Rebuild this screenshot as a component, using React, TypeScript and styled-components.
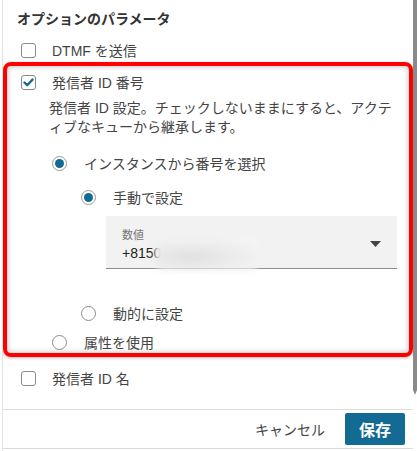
import React from "react";
import styled, { createGlobalStyle } from "styled-components";

const Global = createGlobalStyle`
  html, body { margin: 0; padding: 0; background: #fff; }
  body {
    font-family: "Liberation Sans", "Noto Sans CJK JP", sans-serif;
    color: #444;
  }
`;

const Page = styled.div`
  display: flex;
  width: 417px;
  height: 451px;
  overflow: hidden;
  background: #fff;
`;

const Main = styled.div`
  flex: 1;
  min-width: 0;
  display: flex;
  flex-direction: column;
  margin-left: 2px;
  border-left: 1px solid #e2e2ea;
`;

const Content = styled.div`
  height: 409px;
  box-sizing: border-box;
  padding: 9px 0 0 14px;
  overflow: hidden;
`;

const ScrollColumn = styled.div`
  width: 4px;
  display: flex;
  flex-direction: column;
  align-items: center;
`;

const Thumb = styled.div`
  width: 4px;
  height: 390px;
  background: #8a8a8a;
`;

const ThumbTip = styled.div`
  width: 0;
  height: 0;
  border-left: 2px solid transparent;
  border-right: 2px solid transparent;
  border-top: 5px solid #8a8a8a;
`;

const Title = styled.h3`
  margin: 0;
  font-size: 14px;
  line-height: 20px;
  font-weight: bold;
  color: #333;
`;

const CheckRow = styled.label<{ $mt: number }>`
  display: flex;
  align-items: center;
  gap: 16px;
  height: 20px;
  margin-top: ${(p) => p.$mt}px;
  padding-left: 4px;
  font-size: 14px;
  color: #444;
`;

const CheckBox = styled.span`
  width: 15px;
  height: 15px;
  box-sizing: border-box;
  border: 1px solid #8a8a8a;
  border-radius: 3px;
  background: #fff;
  display: flex;
  align-items: center;
  justify-content: center;
  flex: none;
`;

const Highlight = styled.div`
  margin: 2px 0 0 -14px;
  border: 4px solid #ff0000;
  border-radius: 8px;
  padding: 6px 12px 1px 10px;
  box-shadow: inset 0 0 5px 1px rgba(0, 0, 0, 0.22), 0 1px 3px rgba(0, 0, 0, 0.3);
`;

const Description = styled.p`
  margin: 7px 0 0 32px;
  font-size: 14px;
  line-height: 19px;
  white-space: nowrap;
  color: #444;
`;

const RadioRow = styled.label<{ $mt: number; $indent: number }>`
  display: flex;
  align-items: center;
  gap: 17px;
  height: 20px;
  margin-top: ${(p) => p.$mt}px;
  margin-left: ${(p) => p.$indent}px;
  font-size: 14px;
  color: #444;
`;

const Radio = styled.span<{ $on?: boolean }>`
  width: 15px;
  height: 15px;
  box-sizing: border-box;
  border-radius: 50%;
  border: 1px solid ${(p) => (p.$on ? "#9a9a9a" : "#8d8d8d")};
  background: #fff;
  display: flex;
  align-items: center;
  justify-content: center;
  flex: none;
  &::after {
    content: "";
    display: ${(p) => (p.$on ? "block" : "none")};
    width: 9px;
    height: 9px;
    border-radius: 50%;
    background: #0f6b94;
  }
`;

const Select = styled.div`
  margin: 9px 0 0 89px;
  height: 53px;
  box-sizing: border-box;
  background: #f2f2f2;
  border-bottom: 1px solid #8c8c8c;
  padding: 0 16px;
  display: flex;
  align-items: center;
  justify-content: space-between;
`;

const SelectText = styled.div`
  align-self: flex-start;
  padding-top: 12px;
  display: flex;
  flex-direction: column;
  gap: 2px;
`;

const SelectLabel = styled.span`
  font-size: 11px;
  line-height: 14px;
  color: #777;
`;

const SelectValue = styled.span`
  display: flex;
  align-items: center;
  height: 18px;
  font-size: 14px;
  color: #222;
`;

const Redaction = styled.span`
  width: 104px;
  height: 32px;
  margin: -6px 0 -8px -6px;
  border-radius: 8px;
  background: radial-gradient(ellipse at 35% 60%, #e0e0e0 0%, #ececec 45%, #f7f7f7 100%);
  filter: blur(3px);
  flex: none;
`;

const Caret = styled.svg`
  width: 11px;
  height: 6px;
  margin-top: 3px;
  flex: none;
`;

const Footer = styled.div`
  height: 38px;
  border-top: 1px solid #dcdcdc;
  border-bottom: 1px solid #dcdcdc;
  margin-bottom: 2px;
  display: flex;
  justify-content: flex-end;
  align-items: center;
  gap: 20px;
  padding-right: 8px;
`;

const CancelButton = styled.button`
  background: none;
  border: none;
  padding: 0;
  font-family: inherit;
  font-size: 14px;
  color: #444;
`;

const SaveButton = styled.button`
  width: 60px;
  height: 32px;
  border: none;
  border-radius: 2px;
  background: #136b93;
  color: #fff;
  font-family: inherit;
  font-size: 16px;
  font-weight: bold;
  padding: 0;
`;

const Check = () => (
  <svg width="11" height="9" viewBox="0 0 11 9">
    <polyline
      points="1.5,4.5 4.2,7.2 9.5,1.6"
      fill="none"
      stroke="#1b6c94"
      strokeWidth="2.4"
      strokeLinecap="round"
      strokeLinejoin="round"
    />
  </svg>
);

export default function App() {
  return (
    <>
      <Global />
      <Page>
        <Main>
          <Content>
            <Title>オプションのパラメータ</Title>
            <CheckRow $mt={11}>
              <CheckBox />
              DTMF を送信
            </CheckRow>
            <Highlight>
              <CheckRow $mt={0}>
                <CheckBox>
                  <Check />
                </CheckBox>
                発信者 ID 番号
              </CheckRow>
              <Description>
                発信者 ID 設定。チェックしないままにすると、アクテ
                <br />
                ィブなキューから継承します。
              </Description>
              <RadioRow $mt={16} $indent={35}>
                <Radio $on />
                インスタンスから番号を選択
              </RadioRow>
              <RadioRow $mt={14} $indent={64}>
                <Radio $on />
                手動で設定
              </RadioRow>
              <Select>
                <SelectText>
                  <SelectLabel>数値</SelectLabel>
                  <SelectValue>
                    +8150
                    <Redaction />
                  </SelectValue>
                </SelectText>
                <Caret viewBox="0 0 11 6">
                  <polygon points="0,0 11,0 5.5,6" fill="#444" />
                </Caret>
              </Select>
              <RadioRow $mt={34} $indent={64}>
                <Radio />
                動的に設定
              </RadioRow>
              <RadioRow $mt={9} $indent={35}>
                <Radio />
                属性を使用
              </RadioRow>
            </Highlight>
            <CheckRow $mt={11}>
              <CheckBox />
              発信者 ID 名
            </CheckRow>
          </Content>
          <Footer>
            <CancelButton>キャンセル</CancelButton>
            <SaveButton>保存</SaveButton>
          </Footer>
        </Main>
        <ScrollColumn>
          <Thumb />
          <ThumbTip />
        </ScrollColumn>
      </Page>
    </>
  );
}
